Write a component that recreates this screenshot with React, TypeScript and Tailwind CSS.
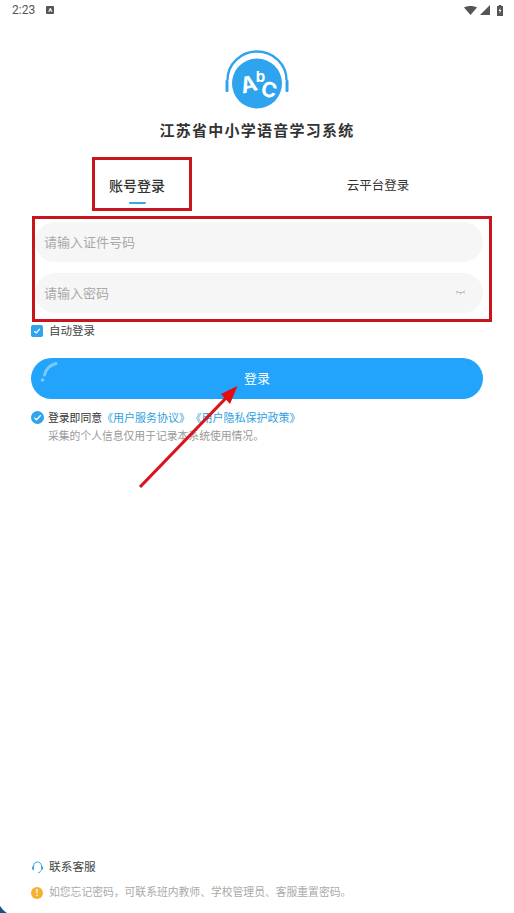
const cjk = "font-['Roboto','Noto_Sans_CJK_SC',sans-serif]";

function Logo() {
  return (
    <svg width="66" height="60" viewBox="0 0 66 60" className="block">
      <path d="M3.500 31 A29.500 28.500 0 0 1 62.500 31" fill="none" stroke="#2ea3ee" strokeWidth="2.400" />
      <rect x="1.500" y="31" width="3" height="12" rx="1" fill="#2ea3ee" />
      <rect x="61.500" y="31" width="3" height="12" rx="1" fill="#2ea3ee" />
      <circle cx="33" cy="34.500" r="25" fill="#2ea3ee" />
      <text x="24.500" y="43" fontSize="22" fontWeight="700" fill="#fff" textAnchor="middle" transform="rotate(-14 24.500 35)" fontFamily="Inter, sans-serif">A</text>
      <text x="36.500" y="33" fontSize="15" fontWeight="700" fill="#fff" textAnchor="middle" fontFamily="Inter, sans-serif">b</text>
      <text x="45" y="48" fontSize="21" fontWeight="700" fill="#fff" textAnchor="middle" transform="rotate(14 45 41)" fontFamily="Inter, sans-serif">C</text>
    </svg>
  );
}

function StatusBar() {
  return (
    <div className="flex h-5 items-center justify-between pl-3 pr-[11px]">
      <div className="flex items-center gap-[11px]">
        <span className="text-[12px] leading-none text-[#555555]">2:23</span>
        <span className="flex h-2 w-2 items-center justify-center rounded-[1px] bg-[#555555] text-[6px] font-bold leading-none text-white">A</span>
      </div>
      <div className="flex items-center gap-[3px]">
        <svg width="13" height="9" viewBox="0 0 13 9"><path d="M0 1.500 C3.500 -0.500 9.500 -0.500 13 1.500 L6.500 9 Z" fill="#555" /></svg>
        <svg width="10" height="10" viewBox="0 0 10 10"><path d="M10 0 V10 H0 Z" fill="#555" /></svg>
        <svg width="6" height="11" viewBox="0 0 6 11" className="ml-[4px]">
          <path d="M1.800 0 H4.200 V1 H6 V11 H0 V1 H1.800 Z" fill="#555" />
          <path d="M3.400 2.500 L1.700 6 H2.900 L2.600 8.800 L4.400 5 H3.100 Z" fill="#fff" />
        </svg>
      </div>
    </div>
  );
}

function InputRow({ placeholder, eye }: { placeholder: string; eye?: boolean }) {
  return (
    <div className="flex h-10 items-center justify-between rounded-[20px] bg-[#f6f6f6] pl-[9px] pr-[17px]">
      <span className="text-[13px] leading-none text-[#a9a9a9]">{placeholder}</span>
      {eye && (
        <svg width="11" height="6" viewBox="0 0 11 6" fill="none" stroke="#999" strokeWidth="0.7">
          <path d="M1 1 C3 3 8 3 10 1 M2.500 2.200 L1.500 3.600 M5.500 2.700 V4.500 M8.500 2.200 L9.500 3.600" />
        </svg>
      )}
    </div>
  );
}

export default function App() {
  return (
    <div className={`relative flex h-[913px] w-[514px] flex-col overflow-hidden bg-white ${cjk}`}>
      <StatusBar />

      <div className="mt-[29px] flex justify-center">
        <Logo />
      </div>
      <h1 className="mt-[12px] text-center text-[15px] font-bold leading-5 tracking-[1.250px] text-[#333333]">
        江苏省中小学语音学习系统
      </h1>

      <div className="mt-[35px] flex px-[31px]">
        <div className="flex w-[212px] flex-col items-center">
          <span className="text-[14px] font-medium leading-5 text-[#333333]">账号登录</span>
          <span className="mt-[6px] h-[2px] w-[17px] rounded-full bg-[#39a9e6]" />
        </div>
        <div className="flex flex-1 justify-center pl-[30px]">
          <span className="text-[12.500px] leading-5 text-[#333333]">云平台登录</span>
        </div>
      </div>

      <div className="ml-[35px] mr-[31px] mt-[18px] flex flex-col gap-[11px]">
        <InputRow placeholder="请输入证件号码" />
        <InputRow placeholder="请输入密码" eye />
      </div>

      <div className="ml-[31px] mt-[10px] flex items-center gap-[6px]">
        <span className="flex h-3 w-3 items-center justify-center rounded-[2px] bg-[#2ea3ee]">
          <svg width="8" height="8" viewBox="0 0 8 8" fill="none" stroke="#fff" strokeWidth="1.200"><path d="M1.200 4.200 L3.200 6 L6.800 2" /></svg>
        </span>
        <span className="text-[11.500px] leading-4 text-[#444444]">自动登录</span>
      </div>

      <div className="relative mx-[31px] mt-[19px] flex h-[41px] items-center justify-center overflow-hidden rounded-[21px] bg-[#22a4fd]">
        <span className="text-[13px] leading-none text-white">登录</span>
        <svg width="22" height="30" viewBox="0 0 22 30" fill="none" className="absolute left-[6px] top-[3px]">
          <path d="M19 2.500 C13 4 9 8 7.500 14" stroke="#7fc8fa" strokeWidth="3" strokeLinecap="round" />
          <circle cx="5.500" cy="19" r="1.800" fill="#7fc8fa" />
        </svg>
      </div>

      <div className="ml-[31px] mt-[9px] flex items-start gap-[4px]">
        <span className="mt-[3px] flex h-[13px] w-[13px] shrink-0 items-center justify-center rounded-full bg-[#2ea3ee]">
          <svg width="9" height="9" viewBox="0 0 8 8" fill="none" stroke="#fff" strokeWidth="1.200"><path d="M1.200 4.200 L3.200 6 L6.800 2" /></svg>
        </span>
        <div>
          <p className="pt-[1px] text-[10.800px] leading-[19px] text-[#333333]">
            登录即同意
            <span className="text-[11px] text-[#2f9fe0]">《用户服务协议》</span>
            <span className="ml-[6px] text-[11px] text-[#2f9fe0]">《用户隐私保护政策》</span>
          </p>
          <p className="text-[10.800px] leading-[18px] text-[#999999]">采集的个人信息仅用于记录本系统使用情况。</p>
        </div>
      </div>

      <div className="mt-auto pb-[12px] pl-[31px]">
        <div className="flex items-center gap-[5px]">
          <svg width="13" height="13" viewBox="0 0 13 13" fill="none" stroke="#3aa7d8" strokeWidth="1">
            <path d="M2.500 7 V5.500 C2.500 -0.500 10.500 -0.500 10.500 5.500 V7 M2.500 5 C1 5 1 9 2.500 9 Z M10.500 5 C12 5 12 9 10.500 9 Z M10 9.500 C9.500 11 8.500 11.500 7 11.500" />
          </svg>
          <span className="text-[11.700px] leading-4 text-[#444444]">联系客服</span>
        </div>
        <div className="mt-[10px] flex items-center gap-[6px]">
          <span className="flex h-3 w-3 items-center justify-center rounded-full bg-[#f4b02f] text-[9px] font-bold leading-none text-white">!</span>
          <span className="text-[10.800px] leading-4 text-[#aaaaaa]">如您忘记密码，可联系班内教师、学校管理员、客服重置密码。</span>
        </div>
      </div>

      {/* Red annotations and the corner mark over the screenshot */}
      <div className="pointer-events-none absolute left-[92px] top-[157px] h-[54px] w-[100px] border-[3px] border-[#c8151b]" />
      <div className="pointer-events-none absolute left-[32px] top-[216px] h-[106px] w-[460px] border-[3px] border-[#c8151b]" />
      <svg width="514" height="913" className="pointer-events-none absolute left-0 top-0">
        <path d="M140 487 L226 398" stroke="#d8141c" strokeWidth="3.200" />
        <path d="M237.500 386 L230 404 L221 394 Z" fill="#e8090f" />
        <path d="M0 906 C2 909 4 911 7 913 L0 913 Z" fill="#1d4f8c" />
      </svg>
    </div>
  );
}
